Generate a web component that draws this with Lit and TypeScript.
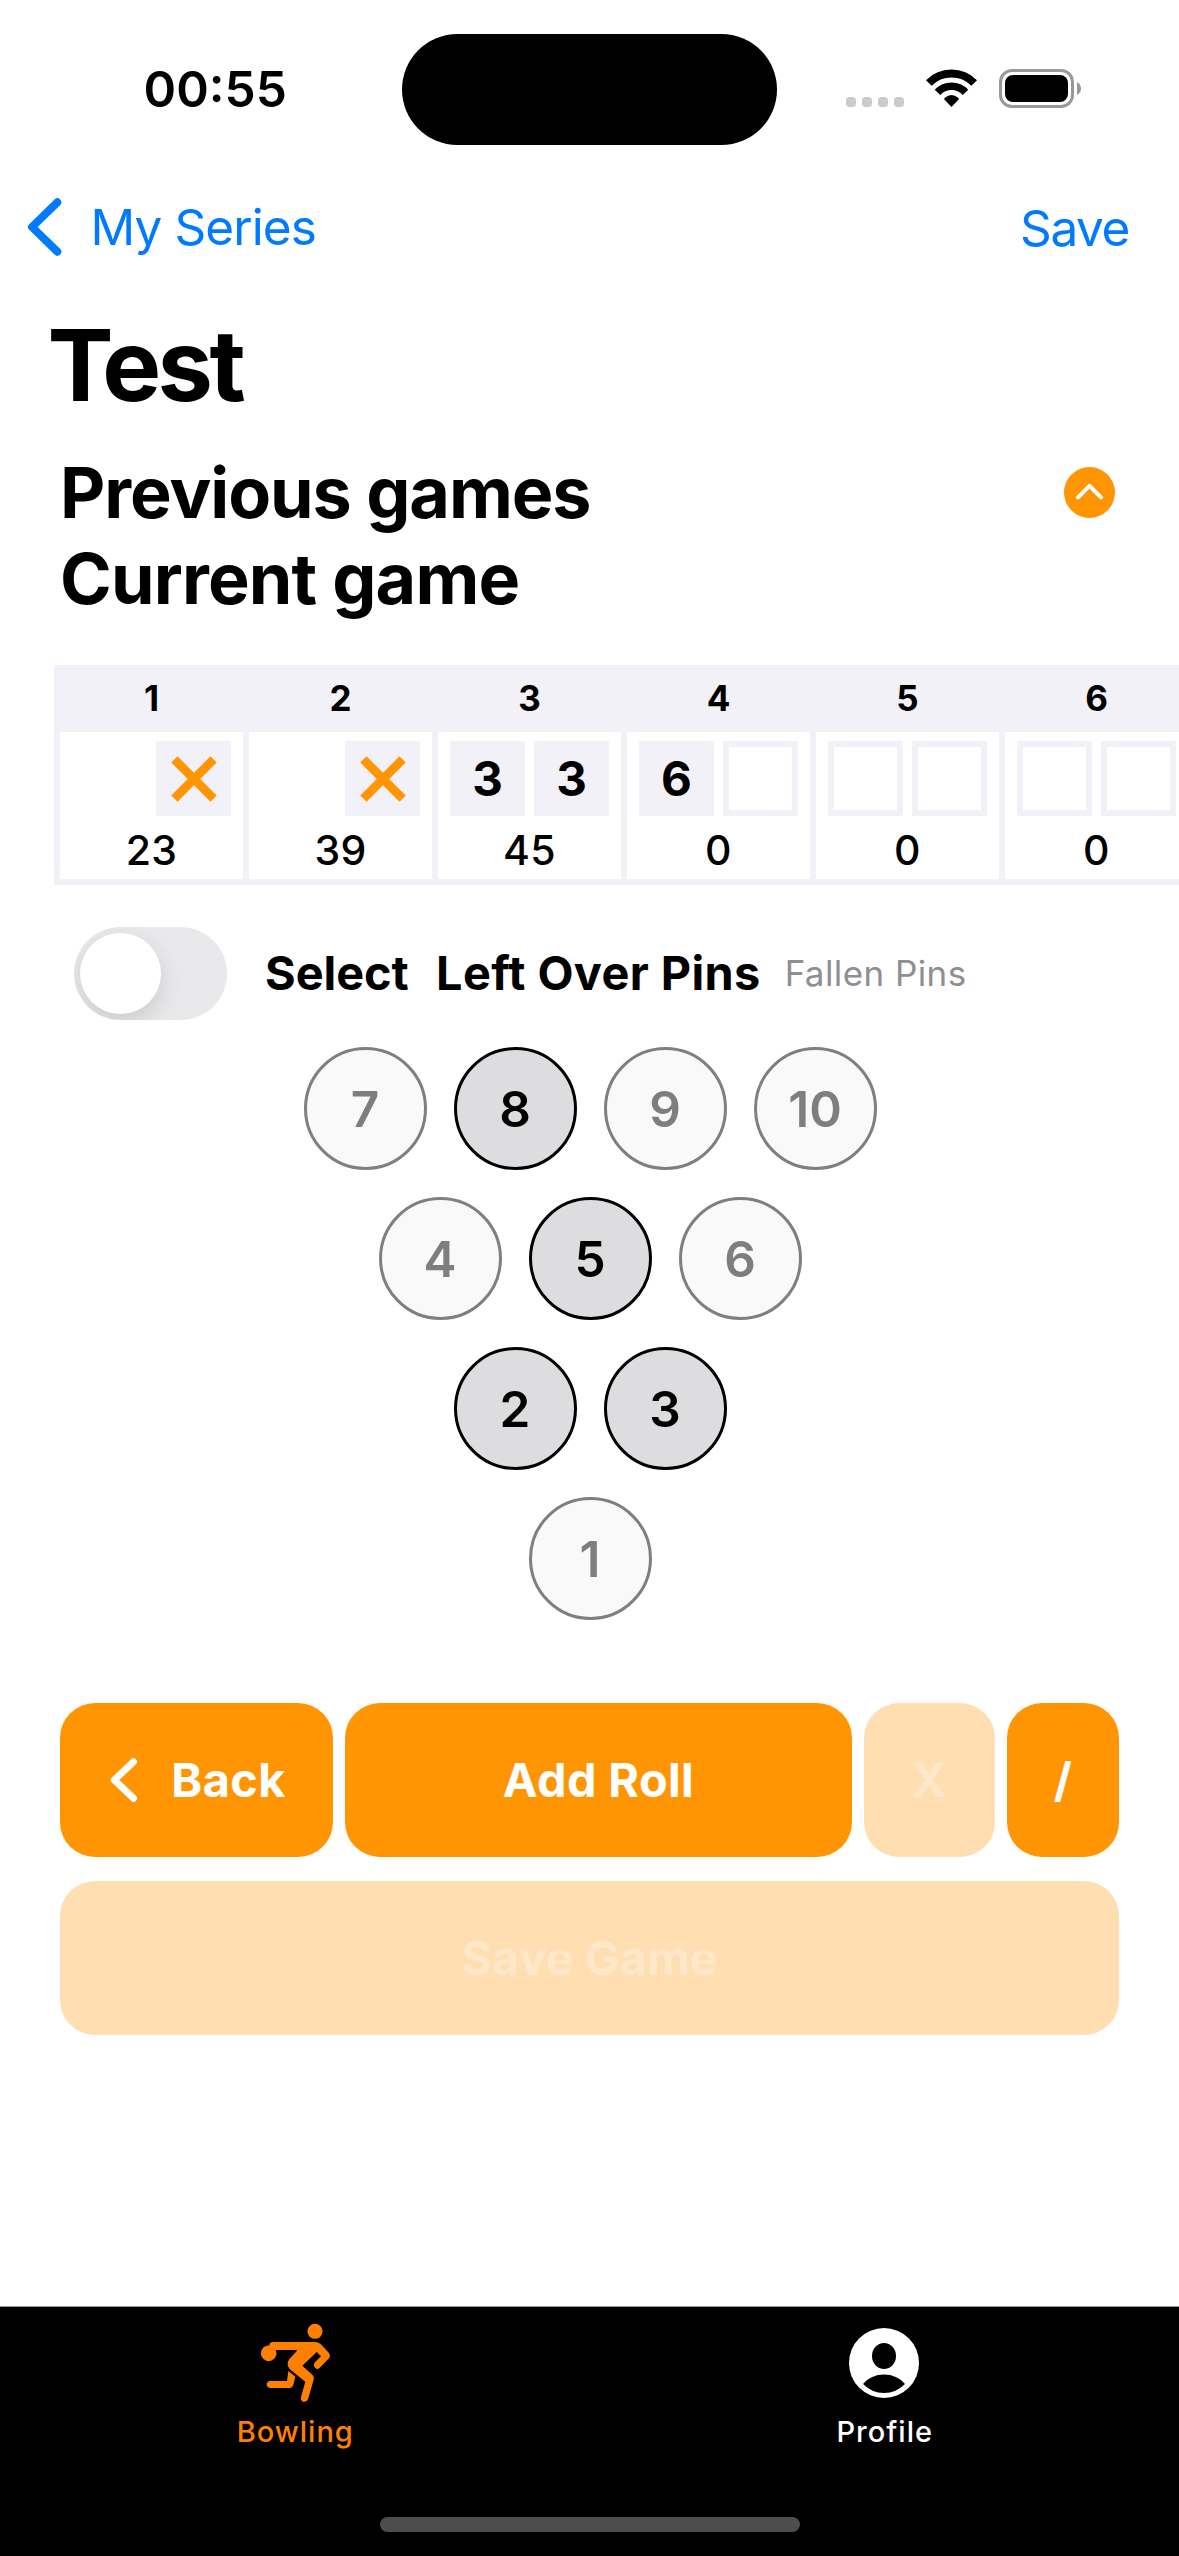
import { LitElement, html, css, svg, nothing } from "lit";
import { customElement, property } from "lit/decorators.js";
import { classMap } from "lit/directives/class-map.js";

type Roll = number | "X" | null;

interface Frame {
  rolls: Roll[];
  score: number;
}

const FRAMES: Frame[] = [
  { rolls: ["X"], score: 23 },
  { rolls: ["X"], score: 39 },
  { rolls: [3, 3], score: 45 },
  { rolls: [6, null], score: 0 },
  { rolls: [null, null], score: 0 },
  { rolls: [null, null], score: 0 },
];

const PIN_ROWS = [[7, 8, 9, 10], [4, 5, 6], [2, 3], [1]];
const STANDING = new Set([8, 5, 2, 3]);

/** Clock, camera cutout, signal, wifi and battery. */
@customElement("status-bar")
export class StatusBar extends LitElement {
  static styles = css`
    :host {
      display: grid;
      grid-template-columns: 402px 375px 1fr;
      align-items: center;
      height: 177px;
    }
    .time {
      padding-left: 143.5px;
      font-size: 49.5px;
      font-weight: 600;
      line-height: 60px;
    }
    .island {
      height: 111px;
      margin-top: 1px;
      border-radius: 56px;
      background: #000;
    }
    .signals {
      display: flex;
      align-items: flex-end;
      height: 39px;
      padding-left: 69px;
    }
    .dots {
      display: flex;
      gap: 6px;
      padding-bottom: 1px;
    }
    .dot {
      width: 10px;
      height: 10px;
      border-radius: 3.5px;
      background: #ccc;
    }
    svg {
      display: block;
    }
    .wifi {
      margin: 0 22px 0 22px;
    }
  `;

  render() {
    return html`
      <div class="time">00:55</div>
      <div class="island"></div>
      <div class="signals">
        <div class="dots">
          ${[0, 1, 2, 3].map(() => html`<div class="dot"></div>`)}
        </div>
        <svg class="wifi" width="51" height="39" viewBox="0 0 51 39">
          <g fill="none" stroke="#000">
            <path d="M2.8 14 A31.9 31.9 0 0 1 48.2 14" stroke-width="8" />
            <path d="M11.5 23.3 A19.3 19.3 0 0 1 39.5 23.3" stroke-width="7.6" />
          </g>
          <path d="M18.6 30.8 Q17.6 29.7 18.8 28.8 Q25.5 23.4 32.2 28.8 Q33.4 29.7 32.4 30.8 L25.5 38 Z" />
        </svg>
        <svg width="83" height="39" viewBox="0 0 83 39">
          <rect x="1.5" y="1.5" width="72" height="36" rx="11.5" fill="none" stroke="#999" stroke-width="3" />
          <rect x="6" y="6" width="63" height="27" rx="8" />
          <path d="M78 13 Q82 15.5 82 19.5 Q82 23.5 78 26 Z" fill="#999" />
        </svg>
      </div>
    `;
  }
}

/** One numbered column of the score sheet. */
@customElement("score-frame")
export class ScoreFrame extends LitElement {
  @property({ type: Number }) number = 1;
  @property({ attribute: false }) frame: Frame = { rolls: [], score: 0 };

  static styles = css`
    :host {
      display: block;
      flex: none;
      width: 183px;
    }
    .number {
      line-height: 67px;
      text-align: center;
      font-size: 35px;
      font-weight: 700;
    }
    .cell {
      box-sizing: border-box;
      height: 147px;
      padding: 9px 12px 0;
      background: #fff;
    }
    .rolls {
      display: flex;
      justify-content: flex-end;
      gap: 9px;
    }
    .roll {
      box-sizing: border-box;
      display: flex;
      align-items: center;
      justify-content: center;
      width: 75px;
      height: 75px;
      border: 6px solid #f2f1f7;
      font-size: 47.5px;
      font-weight: 700;
    }
    .rolled {
      background: #f2f1f7;
    }
    .score {
      margin-top: 3px;
      line-height: 62px;
      text-align: center;
      font-size: 41px;
      font-weight: 500;
      letter-spacing: 0.3px;
    }
  `;

  private renderRoll(roll: Roll) {
    const mark =
      roll === "X"
        ? html`<svg width="46" height="46" viewBox="0 0 46 46">
            <path d="M3.4 3.4 L42.6 42.6 M42.6 3.4 L3.4 42.6" stroke="#ff9503" stroke-width="8.8" />
          </svg>`
        : roll ?? nothing;
    return html`<div class=${classMap({ roll: true, rolled: roll !== null })}>${mark}</div>`;
  }

  render() {
    return html`
      <div class="number">${this.number}</div>
      <div class="cell">
        <div class="rolls">${this.frame.rolls.map((r) => this.renderRoll(r))}</div>
        <div class="score">${this.frame.score}</div>
      </div>
    `;
  }
}

/** The triangle of selectable pins. */
@customElement("pin-deck")
export class PinDeck extends LitElement {
  static styles = css`
    :host {
      display: flex;
      flex-direction: column;
      gap: 27px;
      padding-left: 1px;
    }
    .row {
      display: flex;
      justify-content: center;
      gap: 27px;
    }
    .pin {
      box-sizing: border-box;
      width: 123px;
      height: 123px;
      padding-top: 1px;
      border: 3px solid #7f7f7f;
      border-radius: 50%;
      background: #f9f9f9;
      color: #7e7e7e;
      line-height: 117px;
      text-align: center;
      font-size: 49.5px;
      font-weight: 600;
    }
    .standing {
      border-color: #000;
      background: #dddddf;
      color: #000;
    }
  `;

  render() {
    return PIN_ROWS.map(
      (row) => html`<div class="row">
        ${row.map(
          (n) => html`<div class=${classMap({ pin: true, standing: STANDING.has(n) })}>${n}</div>`
        )}
      </div>`
    );
  }
}

const bowlerIcon = svg`
  <circle cx="285" cy="124" r="22.5" />
  <circle cx="146" cy="190" r="23.5" />
  <path d="M157 156 H286 Q294 156 301 161 L325 187 Q333 196 327 205 L301 232 Q292 241 285 233 Q278 225 285 217 L303 199 L290 186 L247 227 L277 254 Q283 260 281 269 L264 328 Q261 336 252 336 Q240 333 243 321 L256 275 L208 236 Q198 222 208 208 L231 182 Q232 180 229 180 H160 L147 170 Q148 157 157 156 Z" />
  <path d="M205 243 L226 260 L219 287 Q216 294 208 294 H150 Q140 293 140 283 Q141 274 150 273 H201 Z" />
`;

/** Bottom tabs with the home indicator. */
@customElement("tab-bar")
export class TabBar extends LitElement {
  static styles = css`
    :host {
      box-sizing: border-box;
      display: flex;
      flex-direction: column;
      height: 250px;
      border-top: 1px solid #999;
      background: #000;
    }
    .tabs {
      display: grid;
      grid-template-columns: 1fr 1fr;
      padding-top: 16px;
    }
    .tab {
      display: flex;
      flex-direction: column;
      align-items: center;
      gap: 11px;
      color: #fff;
      font-size: 29px;
      font-weight: 500;
      line-height: 36px;
      letter-spacing: 1px;
    }
    .label {
      padding-left: 1px;
    }
    .active {
      color: #ff8000;
    }
    .icon {
      display: flex;
      align-items: center;
      height: 80px;
    }
    svg {
      display: block;
      fill: currentColor;
    }
    .home {
      width: 420px;
      height: 15px;
      margin: auto auto 24px;
      border-radius: 8px;
      background: #4d4d4d;
    }
  `;

  render() {
    return html`
      <div class="tabs">
        <div class="tab active">
          <div class="icon">
            <svg width="71.33" height="80" viewBox="117 99 214 240">${bowlerIcon}</svg>
          </div>
          <div class="label">Bowling</div>
        </div>
        <div class="tab">
          <div class="icon">
            <svg width="70" height="70" viewBox="0 0 70 70">
              <circle cx="35" cy="35" r="35" />
              <ellipse cx="35" cy="28" rx="12" ry="13" fill="#000" />
              <path d="M14 56 Q22 46.5 35 46.5 Q48 46.5 56 56 Q47 65 35 65 Q23 65 14 56 Z" fill="#000" />
            </svg>
          </div>
          <div class="label">Profile</div>
        </div>
      </div>
      <div class="home"></div>
    `;
  }
}

@customElement("app-root")
export class AppRoot extends LitElement {
  static styles = css`
    :host {
      display: flex;
      flex-direction: column;
      width: 1179px;
      height: 2556px;
      overflow: hidden;
      background: #fff;
      color: #000;
      font-family: Inter, "Liberation Sans", sans-serif;
    }
    svg {
      display: block;
    }
    .nav {
      display: flex;
      align-items: center;
      justify-content: space-between;
      height: 100px;
      padding: 0 50px 0 27px;
      color: #007aff;
      font-size: 49.5px;
      line-height: 60px;
    }
    .back {
      display: flex;
      align-items: center;
      gap: 28.5px;
      letter-spacing: -0.93px;
    }
    .save {
      padding-top: 2px;
      letter-spacing: -1.4px;
    }
    .title {
      margin: 28px 0 0;
      padding-left: 47.5px;
      font-size: 99px;
      font-weight: 700;
      line-height: 120px;
      letter-spacing: -3.6px;
    }
    .sections {
      padding: 25px 64px 0 60px;
    }
    .section {
      display: flex;
      align-items: center;
      justify-content: space-between;
      height: 86px;
      margin: 0;
      font-size: 70px;
      font-weight: 700;
      line-height: 86px;
      letter-spacing: -1.07px;
    }
    .disclosure {
      margin-bottom: 2px;
    }
    .current {
      letter-spacing: -0.81px;
    }
    .sheet {
      display: flex;
      gap: 6px;
      height: 214px;
      margin: 43px 0 0 54px;
      padding-left: 6px;
      border-bottom: 6px solid #f2f1f7;
      background: #f2f1f7;
      overflow: hidden;
    }
    .mode {
      display: flex;
      align-items: center;
      height: 93px;
      margin-top: 42px;
      padding-left: 74px;
      font-size: 46.8px;
      font-weight: 700;
      line-height: 60px;
    }
    .toggle {
      display: flex;
      align-items: center;
      box-sizing: border-box;
      width: 153px;
      height: 93px;
      padding-left: 6px;
      border-radius: 47px;
      background: #e9e9eb;
      overflow: hidden;
    }
    .knob {
      width: 81px;
      height: 81px;
      border-radius: 50%;
      background: #fff;
      box-shadow: 0 9px 24px rgba(0, 0, 0, 0.13);
    }
    .select {
      margin-left: 38px;
      padding-bottom: 2px;
    }
    .chosen {
      margin-left: 27.3px;
      padding-bottom: 2px;
      letter-spacing: 0.4px;
    }
    .other {
      margin-left: 24px;
      padding-bottom: 1px;
      color: #8e8e93;
      font-size: 35px;
      font-weight: 400;
      letter-spacing: 0.42px;
    }
    pin-deck {
      margin-top: 27px;
    }
    .actions {
      display: grid;
      grid-template-columns: 273px 507px 131px 1fr;
      gap: 24px 12px;
      margin-top: 83px;
      padding: 0 60px;
    }
    .button {
      display: flex;
      align-items: center;
      justify-content: center;
      height: 154px;
      border-radius: 35px;
      background: #ff9503;
      color: #fff;
      font-size: 46.8px;
      font-weight: 700;
      letter-spacing: 0.4px;
    }
    .previous {
      gap: 33px;
      padding-left: 3px;
      box-sizing: border-box;
    }
    .disabled {
      background: #ffdeb1;
      color: #ffe8ca;
    }
    .wide {
      grid-column: 1 / -1;
      letter-spacing: 0;
    }
    tab-bar {
      margin-top: auto;
    }
  `;

  render() {
    return html`
      <status-bar></status-bar>
      <div class="nav">
        <div class="back">
          <svg width="35" height="58" viewBox="0 0 35 58" fill="none" stroke="#007aff" stroke-width="8" stroke-linecap="round" stroke-linejoin="round">
            <path d="M30.3 4.3 L5 29 L30.3 53.7" />
          </svg>
          My Series
        </div>
        <div class="save">Save</div>
      </div>
      <h1 class="title">Test</h1>
      <div class="sections">
        <h2 class="section">
          Previous games
          <svg class="disclosure" width="51" height="51" viewBox="0 0 51 51">
            <circle cx="25.5" cy="25.5" r="25.5" fill="#ff9503" />
            <path d="M14 30.3 L25.5 18.8 L37 30.3" fill="none" stroke="#fff" stroke-width="4" stroke-linecap="round" stroke-linejoin="round" />
          </svg>
        </h2>
        <h2 class="section current">Current game</h2>
      </div>
      <div class="sheet">
        ${FRAMES.map((f, i) => html`<score-frame .number=${i + 1} .frame=${f}></score-frame>`)}
      </div>
      <div class="mode">
        <div class="toggle"><div class="knob"></div></div>
        <div class="select">Select</div>
        <div class="chosen">Left Over Pins</div>
        <div class="other">Fallen Pins</div>
      </div>
      <pin-deck></pin-deck>
      <div class="actions">
        <div class="button previous">
          <svg width="28" height="44" viewBox="0 0 28 44" fill="none" stroke="#fff" stroke-width="7" stroke-linecap="round" stroke-linejoin="round">
            <path d="M23.5 3.7 L4.3 22 L23.5 40.3" />
          </svg>
          Back
        </div>
        <div class="button">Add Roll</div>
        <div class="button disabled">X</div>
        <div class="button">/</div>
        <div class="button disabled wide">Save Game</div>
      </div>
      <tab-bar></tab-bar>
    `;
  }
}
